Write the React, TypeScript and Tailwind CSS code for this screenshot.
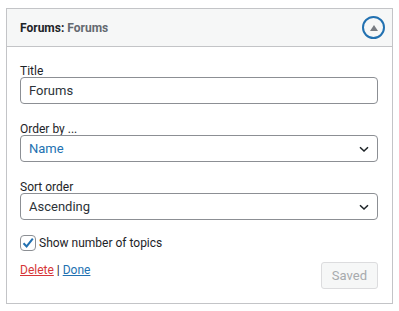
import { useState } from 'react';

function Chevron() {
  return (
    <svg width="12" height="12" viewBox="0 0 12 12" className="pointer-events-none absolute right-[8px] top-1/2 -translate-y-1/2">
      <path d="M2 4.2 L6 8 L10 4.2" fill="none" stroke="#1d2327" strokeWidth="1.5" />
    </svg>
  );
}

export default function App() {
  const [title, setTitle] = useState('Forums');
  const [orderBy, setOrderBy] = useState('Name');
  const [sortOrder, setSortOrder] = useState('Ascending');
  const [showCount, setShowCount] = useState(true);

  return (
    <div className="min-h-screen bg-white pt-[8px] pl-[6px] pr-[6px]" style={{ fontFamily: 'Roboto, "Noto Sans", sans-serif' }}>
      <div className="border border-[#c3c4c7] bg-white">
        <div className="flex h-[38px] items-center justify-between border-b border-[#c3c4c7] bg-[#f6f7f7] pl-[13px] pr-[7px]">
          <h3 className="pt-[1px] text-[12px] font-bold text-[#1d2327]">
            Forums:<span className="text-[#646970]"> Forums</span>
          </h3>
          <button className="flex h-[23px] w-[23px] items-center justify-center rounded-full border-2 border-[#2271b1]">
            <svg width="8" height="6" viewBox="0 0 8 6">
              <path d="M0 6 L4 0 L8 6 Z" fill="#787c82" />
            </svg>
          </button>
        </div>

        <div className="pl-[13px] pr-[14px] pt-[13px] pb-[14px] text-[12px] text-[#1d2327]">
          <label className="block h-4 leading-[22px]">Title</label>
          <input
            value={title}
            onChange={(e) => setTitle(e.target.value)}
            className="mt-[1px] block h-[27px] w-full rounded-[4px] border border-[#8c8f94] px-[8px] text-[13px] text-[#2c3338] outline-none"
          />

          <label className="mt-[14px] block h-4 leading-[22px]">Order by ...</label>
          <div className="relative mt-[1px]">
            <select
              value={orderBy}
              onChange={(e) => setOrderBy(e.target.value)}
              className="block h-[27px] w-full appearance-none rounded-[4px] border border-[#8c8f94] bg-white px-[8px] text-[13px] text-[#2271b1] outline-none"
            >
              <option>Name</option>
              <option>Topics</option>
              <option>Posts</option>
            </select>
            <Chevron />
          </div>

          <label className="mt-[14px] block h-4 leading-[22px]">Sort order</label>
          <div className="relative mt-[1px]">
            <select
              value={sortOrder}
              onChange={(e) => setSortOrder(e.target.value)}
              className="block h-[27px] w-full appearance-none rounded-[4px] border border-[#8c8f94] bg-white px-[8px] text-[13px] text-[#2c3338] outline-none"
            >
              <option>Ascending</option>
              <option>Descending</option>
            </select>
            <Chevron />
          </div>

          <label className="mt-[14px] flex items-center gap-[3px] leading-4">
            <button
              onClick={() => setShowCount(!showCount)}
              className="flex h-[16px] w-[16px] items-center justify-center rounded-[4px] border border-[#8c8f94] bg-white"
            >
              {showCount && (
                <svg width="14" height="14" viewBox="0 0 14 14">
                  <path d="M2.5 7.2 L5.6 10.4 L11.8 2.6" fill="none" stroke="#2271b1" strokeWidth="2" />
                </svg>
              )}
            </button>
            <span className="pt-[1px]">Show number of topics</span>
          </label>

          <div className="mt-[11px] flex items-start justify-between">
            <div className="leading-4">
              <a className="text-[#d63638] underline">Delete</a>
              <span className="text-[#1d2327]"> | </span>
              <a className="text-[#2271b1] underline">Done</a>
            </div>
            <button
              disabled
              className="h-[27px] rounded-[3px] border border-[#dcdcde] bg-[#f6f7f7] px-[10px] text-[13px] text-[#a7aaad]"
            >
              Saved
            </button>
          </div>
        </div>
      </div>
    </div>
  );
}
